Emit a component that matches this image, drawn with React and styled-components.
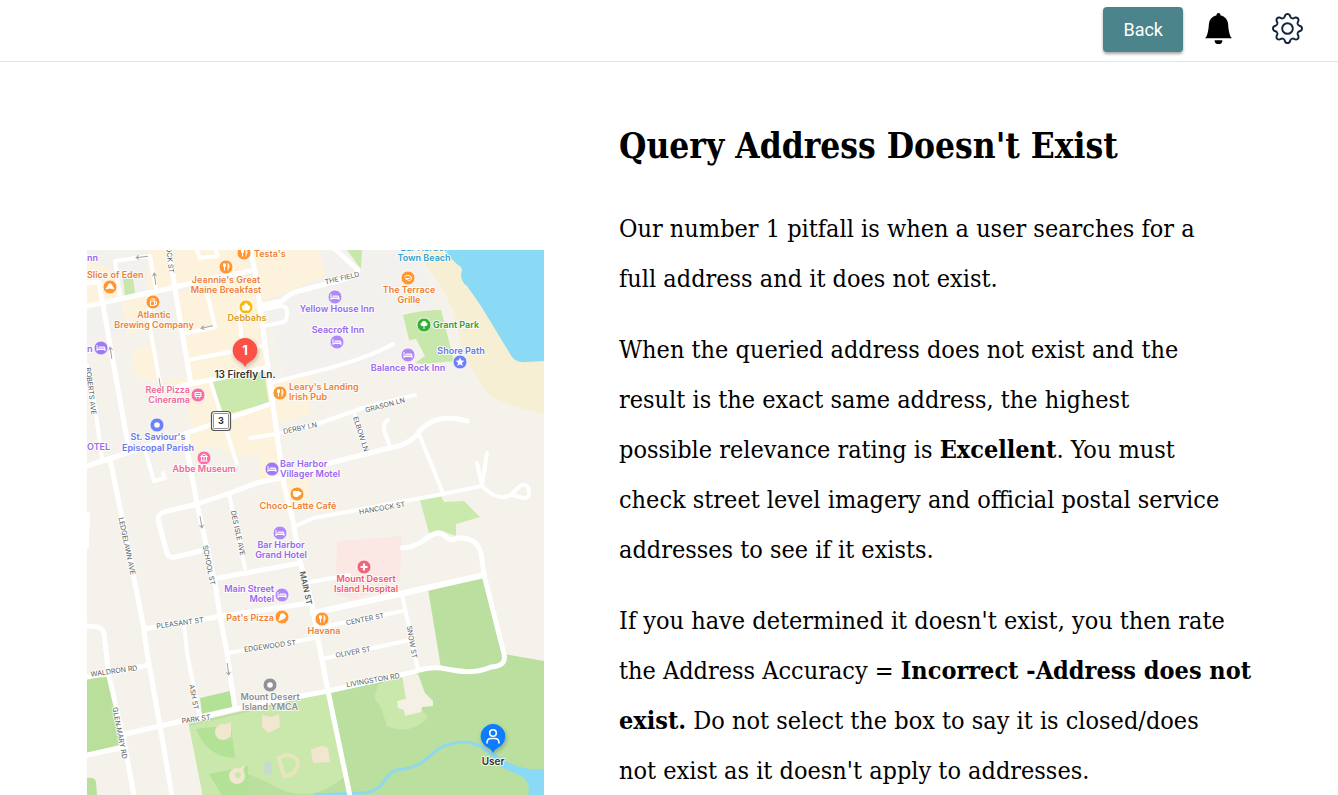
import React from "react";
import styled, { createGlobalStyle } from "styled-components";
import { BsBellFill, BsGear } from "react-icons/bs";

const GlobalStyle = createGlobalStyle`
  *, *::before, *::after { box-sizing: border-box; }
  body { margin: 0; background: #fff; color: #000; }
`;

const slab = `"Roboto Slab", "DejaVu Serif Condensed", "DejaVu Serif", serif`;

const Header = styled.header`
  display: flex;
  justify-content: flex-end;
  align-items: flex-start;
  padding: 7px 35px 9px;
  border-bottom: 1px solid #e2e4e6;
`;

const BackButton = styled.button`
  height: 45px;
  padding: 0 20px;
  margin-right: 20px;
  border: 0;
  border-radius: 4px;
  background: #4b858b;
  color: #fff;
  font: 400 18px/24px Roboto, "Liberation Sans", sans-serif;
  box-shadow: 0 2px 3px rgba(0, 0, 0, 0.35);
  cursor: pointer;
`;

const IconButton = styled.button`
  display: flex;
  padding: 6px 0 0;
  border: 0;
  background: none;
  color: ${(p) => p.$color};
  font-size: 31px;
  cursor: pointer;

  & + & { margin-left: 38px; }
`;

const Main = styled.main`
  display: grid;
  grid-template-columns: 457fr 660fr;
  column-gap: 75px;
  align-items: end;
  padding: 53px 59px 0 87px;
`;

const Figure = styled.figure`
  margin: 0;
`;

const MapSvg = styled.svg`
  display: block;
  width: 100%;
  height: auto;
  background: #f5f2eb;
`;

const Article = styled.article`
  font-family: ${slab};
`;

const Title = styled.h1`
  margin: 0 0 27px;
  font-size: 35px;
  line-height: 62px;
  font-weight: 700;
`;

const Paragraph = styled.p`
  margin: 0;
  font-size: 25px;
  line-height: 50px;

  & + & { margin-top: 21px; }
`;

const Road = styled.path`
  fill: none;
  stroke: #fff;
  stroke-width: ${(p) => p.$w || 5};
  stroke-linecap: round;
  stroke-linejoin: round;
`;

const Label = styled.text`
  font-family: Inter, "Liberation Sans", sans-serif;
  font-size: ${(p) => p.$size || 9}px;
  font-weight: ${(p) => p.$weight || 600};
  fill: ${(p) => p.$color};
  stroke: #fffc;
  stroke-width: 2;
  paint-order: stroke;
  stroke-linejoin: round;
`;

const C = {
  orange: "#ee8238",
  purple: "#9a68ee",
  pink: "#f0679d",
  blue: "#6a78ee",
  red: "#ee5a6c",
  green: "#2f9a3a",
  sea: "#2fa3cf",
  gold: "#dc9a24",
  gray: "#8e8e92",
  dark: "#333333",
  street: "#5c5c5c",
};

const roads = [
  ["M0 56 L80 39 L105 33 L163 21", 5],
  ["M82 0 L88 39 L95 82 L104 134"],
  ["M33 46 L28 11 L63 6 L69 39", 4],
  ["M62 44 L64 84 L73 134", 4],
  ["M90 137 L123 130 L178 118"],
  ["M101 110 L175 96", 4],
  ["M95 84 L128 77 L119 39", 4],
  ["M163 0 L168 21 L175 71 L183 133 L190 184 L196 231 L206 271 L213 311 L225 354 L230 384 L241 441 L263 546", 5],
  ["M172 56 L195 51 Q203 43 212 41 L247 32 Q272 26 271 20 L247 -2"],
  ["M173 60 L194 56 Q201 56 200 64 Q200 73 192 73 L177 76", 4],
  ["M152 63 L155 92", 4],
  ["M109 -2 L113 8 L131 6 L128 -2", 4],
  ["M183 133 L243 118 Q285 106 306 94", 4],
  ["M123 130 L150 214", 4],
  ["M0 216 L37 204 L100 183 L183 154"],
  ["M163 188 L190 184 L230 174 L276 158 L328 145", 4],
  ["M267 162 L280 204", 3],
  ["M113 301 L88 307 Q82 308 80 303 L71 270 Q71 264 77 262 L110 254 L143 243 L170 233 L193 228 L243 213 L303 198 Q324 194 332 182 Q348 162 380 171", 5],
  ["M303 197 L297 180 Q296 173 301 170", 4],
  ["M332 184 L356 243", 4],
  ["M208 276 L227 268 L356 244 L395 236 Q410 252 424 245 L433 236 Q440 232 442 241 Q443 248 437 248 L424 245", 4],
  ["M400 203 L395 235 L390 213", 4],
  ["M100 183 L101 204 L110 254 L128 333 L133 366 L140 403 L148 459"],
  ["M142 244 L158 318", 4],
  ["M126 329 L213 313"],
  ["M218 333 L262 325", 4],
  ["M57 379 L130 367 L222 353"],
  ["M226 363 L313 344 L397 325", 6],
  ["M315 298 C336 297 342 282 352 283 C359 283 360 294 370 288 Q390 287 394 303 L397 325 L417 404 Q420 416 404 417 C388 424 374 422 354 418 Q340 417 327 422 L241 441 L148 459 L38 484 L34 498 L0 505", 5],
  ["M141 403 L228 388", 4],
  ["M230 378 L316 361", 4],
  ["M235 409 L323 390", 4],
  ["M315 344 L331 420", 4],
  ["M23 209 L35 268 L57 379 L60 403 L73 476 L85 546"],
  ["M97 374 L100 403 L112 464", 4],
  ["M0 376 L10 377 Q16 378 17 384 L22 426 L38 496 L47 546", 5],
  ["M0 427 L62 415", 5],
  ["M0 115 L7 151 L15 208", 4],
  ["M0 33 L12 32 L25 106 L42 200", 5],
  ["M58 200 L67 231 L78 228 L76 223", 4],
  ["M1 264 L0 297", 4],
];

const streets = [
  ["THE FIELD", 255, 28, -13],
  ["OCK ST", 83, 10, 84],
  ["ROBERTS AVE", 4, 141, 83],
  ["DERBY LN", 213, 178, -12],
  ["GRASON LN", 298, 155, -15],
  ["ELBOW LN", 274, 184, 72],
  ["HANCOCK ST", 295, 258, -10],
  ["DES ISLE AVE", 151, 283, 78],
  ["LEDGELAWN AVE", 40, 296, 78],
  ["SCHOOL ST", 122, 315, 79],
  ["MAIN ST", 219, 338, 78, 600, 8],
  ["PLEASANT ST", 93, 373, -8],
  ["EDGEWOOD ST", 183, 396, -8],
  ["CENTER ST", 278, 369, -11],
  ["OLIVER ST", 266, 402, -11],
  ["SNOW ST", 325, 392, 80],
  ["LIVINGSTON RD", 286, 430, -10],
  ["ASH ST", 107, 447, 79],
  ["PARK ST", 109, 469, -8],
  ["WALDRON RD", 27, 421, -8],
  ["GLEN MARY RD", 33, 483, 79],
];

const labels = [
  ["nn", 0, 11, C.purple, "start"],
  ["Slice of Eden", 0, 28, C.orange, "start"],
  ["Testa's", 167, 7, C.orange, "start"],
  ["Jeannie's Great", 139, 33, C.orange],
  ["Maine Breakfast", 139, 43, C.orange],
  ["Bar Harbor", 337, 1, C.sea],
  ["Town Beach", 337, 11, C.sea],
  ["The Terrace", 322, 43, C.orange],
  ["Grille", 322, 53, C.orange],
  ["Atlantic", 67, 68, C.orange],
  ["Brewing Company", 67, 78, C.orange],
  ["Debbahs", 160, 71, C.gold],
  ["Yellow House Inn", 250, 62, C.purple],
  ["Seacroft Inn", 251, 83, C.purple],
  ["Grant Park", 346, 78, C.green, "start"],
  ["Shore Path", 374, 104, C.blue],
  ["Balance Rock Inn", 321, 121, C.purple],
  ["n", 0, 102, C.purple, "start"],
  ["Leary's Landing", 202, 140, C.orange, "start"],
  ["Irish Pub", 202, 150, C.orange, "start"],
  ["Reel Pizza", 103, 143, C.pink, "end"],
  ["Cinerama", 103, 153, C.pink, "end"],
  ["St. Saviour's", 71, 190, C.blue],
  ["Episcopal Parish", 71, 201, C.blue],
  ["OTEL", 0, 200, C.purple, "start"],
  ["Abbe Museum", 117, 222, C.pink],
  ["Bar Harbor", 193, 217, C.purple, "start"],
  ["Villager Motel", 193, 227, C.purple, "start"],
  ["Choco-Latte Café", 211, 259, C.orange],
  ["Bar Harbor", 194, 298, C.purple],
  ["Grand Hotel", 194, 308, C.purple],
  ["Mount Desert", 279, 332, C.red],
  ["Island Hospital", 279, 342, C.red],
  ["Main Street", 187, 342, C.purple, "end"],
  ["Motel", 187, 352, C.purple, "end"],
  ["Pat's Pizza", 187, 371, C.orange, "end"],
  ["Havana", 237, 384, C.orange],
  ["Mount Desert", 183, 450, C.gray],
  ["Island YMCA", 183, 460, C.gray],
];

const glyphs = {
  bed: "M-4 -3V3M-4 1.5H4V3M-3 0H4V1.5M-2 -1H3.5V0",
  fork: "M-2.5 -3.5V-1Q-2.5 0 -1.5 0Q-0.5 0 -0.5 -1V-3.5M-1.5 -3.5V3.5M2 3.5V-3.5Q3.5 -2 3 0.5H2",
  slice: "M-4 2Q0 0 4 2L1 -3Q-1 -4 -2 -1Z",
  pizza: "M-3 3.5L-1 -3Q3 -4 3.5 0ZM-3 3.5L3 1",
  mug: "M-2.5 -1V3.5H1.5V-1ZM1.5 0H3.5V2.5H1.5M-3 -2Q-2 -4 0 -3Q2 -4 2 -1.5",
  bag: "M-3.5 -1H3.5L3 3H-3ZM-1.5 -1Q-1.5 -3.5 0 -3.5Q1.5 -3.5 1.5 -1",
  burger: "M-3.5 -1.5Q0 -4 3 -1.5L3.5 1Q2 4 0 2L-3 0.5H2",
  tree: "M0 4V0M-2.5 0.5Q-4 -1 -2 -2.5Q0 -5 2 -2.5Q4 -1 2.5 0.5Z",
  film: "M-3 -2.5H3V1.5H-3ZM-2 3H-1M1 3H2M-3 -0.5H3",
  museum: "M-3.5 -1.5L0 -4L3.5 -1.5ZM-2.5 -1V2.5M0 -1V2.5M2.5 -1V2.5M-3.5 3H3.5",
  cup: "M-3.5 -2.5H2V0.5Q2 2.5 0 2.5H-1.5Q-3.5 2.5 -3.5 0.5ZM2 -1.5H4Q4 1 2 1",
  cross: "M0 -3.5V3.5M-3.5 0H3.5",
};
const filled = new Set(["slice", "pizza", "bag", "tree", "cup"]);

const places = [
  ["fork", 157, 3, "#ff9630"], ["fork", 139, 17, "#ff9630"], ["slice", 23, 37, "#ff9630"],
  ["mug", 66, 52, "#ff9630"], ["bag", 159, 57, "#f8b90c"], ["bed", 14, 98, "#a07af4"],
  ["burger", 321, 28, "#ff9630"], ["bed", 248, 47, "#b088f8"], ["bed", 250, 92, "#b088f8"],
  ["tree", 337, 75, "#37ad38"], ["bed", 321, 105, "#b088f8"], ["star", 373, 112, "#6d80fa"],
  ["fork", 193, 143, "#f59a34"], ["film", 111, 145, "#fb6da5"], ["dot", 70, 175, "#6d80fa"],
  ["museum", 117, 208, "#fb6da5"], ["bed", 185, 219, "#a07af4"], ["cup", 210, 244, "#f59a34"],
  ["bed", 193, 283, "#b088f8"], ["cross", 277, 317, "#f36375"], ["bed", 195, 345, "#b088f8"],
  ["pizza", 195, 367, "#ff9630"], ["fork", 235, 369, "#ff9630"], ["dot", 183, 435, "#929294"],
];

const arrows = [
  [55, 7, 172], [68, 29, -98], [120, 77, 168], [24, 103, -98], [73, 134, 80], [114, 272, 80], [141, 419, 82],
];

function Place({ kind, x, y, color }) {
  return (
    <g transform={`translate(${x} ${y})`}>
      <circle r="7" fill={color} stroke="#fff" strokeWidth="0.8" />
      {kind === "dot" && <circle r="2.8" fill="#fff" />}
      {kind === "star" && (
        <path d="M0 -4.4L1.3 -1.5L4.4 -1.3L2 0.8L2.7 3.9L0 2.2L-2.7 3.9L-2 0.8L-4.4 -1.3L-1.3 -1.5Z" fill="#fff" />
      )}
      {glyphs[kind] && (
        <path
          d={glyphs[kind]}
          fill={filled.has(kind) ? "#fff" : "none"}
          stroke="#fff"
          strokeWidth={kind === "cross" ? 2.2 : 1}
          strokeLinejoin="round"
        />
      )}
    </g>
  );
}

function TownMap() {
  return (
    <MapSvg viewBox="0 0 457 546" role="img" aria-label="Map of Bar Harbor with result 1 and the user location">
      <defs>
        <filter id="pinShadow" x="-50%" y="-50%" width="200%" height="200%">
          <feDropShadow dx="1" dy="2" stdDeviation="2" floodOpacity="0.25" />
        </filter>
      </defs>
      <rect width="457" height="546" fill="#f5f2eb" />

      <path fill="#f3f1ee" d="M0 0H330L350 60L315 60L320 105L200 130L180 60L0 90Z" />
      <path fill="#fdf2dc" d="M0 10L27 20L33 46L0 55ZM60 0H150L165 20L90 38L60 44ZM165 0H232L238 25L205 40L175 52ZM90 42L150 28L168 30L172 80L182 130L222 128L222 165L192 172L196 225L222 222L222 255L200 265L190 225L172 232L172 205L150 208L128 195L102 205L104 175L95 135L48 128L45 100L66 95L72 130L100 130ZM33 48L62 42L64 80L40 84Z" />
      <path fill="#f6efd3" d="M330 0H360L457 90V164Q430 158 414 151Q398 146 392 130L377 106L366 60L356 40Z" />
      <path fill="#8adaf6" d="M357 0Q365 10 371 15Q377 18 374 24Q374 32 380 36L394 56L414 89L425 107Q430 113 438 112L457 111V0Z" />
      <path fill="#c8e8ab" d="M36 29L46 28L48 43L38 46ZM260 0H275L274 19ZM316 65Q335 60 354 60L367 111L337 114L328 113L338 106L329 89L322 90Z" />
      <path fill="#cbe9ac" d="M125 131L177 121L182 153L134 166Z" />
      <path fill="#c9e9ad" d="M333 250L354 246L357 252L377 251L393 267L369 274V286L352 280L342 283Z" />
      <path fill="#fbe8e5" d="M250 291L315 286L313 331L268 350L248 344Z" />

      <path fill="#badf9f" d="M341 339L390 327L400 329L417 404L457 411V546H40L100 474L241 441L327 422L354 418Z" />
      <path fill="#f5f2eb" d="M40 484L102 474L116 546H40Z" />
      <path fill="#cbe8ac" d="M102 476L241 443L260 524Q222 560 180 532L161 524V546H116Z" />
      <path fill="#b3e297" d="M109 479Q130 476 144 477L148 508Q121 508 109 479ZM122 524L161 516V546H135ZM113 448L143 441L147 459L115 464Z" />
      <path fill="#b9df9b" d="M0 428L23 427L36 494L0 503ZM0 528Q8 527 9 532L10 546H0Z" />
      <g fill="#f1e7cf">
        <circle cx="136" cy="482" r="8" />
        <path d="M136 475L144 472L144 489ZM175 465L184 467L192 464L193 477L182 483L175 477Z" />
        <circle cx="150" cy="526" r="8" />
        <path d="M150 520L158 515L155 526Z" />
        <path d="M224 500Q236 493 241 498L243 512L226 513Z" />
      </g>
      <path d="M192 508Q203 501 211 511Q210 526 197 526Z" fill="#c7e9a9" stroke="#e8e4be" strokeWidth="4" />
      <circle cx="151" cy="525" r="3" fill="#cbe8ac" />
      <path fill="#c6dccc" d="M176 513L184 510L185 524L178 526Z" />
      <path fill="#cbe8ac" d="M292 434L312 427L341 468Q322 486 300 476L294 458L287 447Z" />
      <path fill="#f5f0e6" d="M315 427L331 424L338 443L346 451V456L335 457L334 462L318 466L317 460L311 458L310 451L319 449Z" />

      <path d="M227 545L274 543C300 542 295 524 310 520C340 517 340 504 357 496Q384 486 400 501L420 517" fill="none" stroke="#8fd8ee" strokeWidth="3" />
      <path fill="#8adaf6" d="M404 501L420 512Q440 521 457 519V546H441Q444 534 436 527L414 517Z" />

      <g>{roads.map(([d, w]) => <Road key={d} d={d} $w={w} />)}</g>

      {arrows.map(([x, y, r]) => (
        <path key={`${x}-${y}`} transform={`translate(${x} ${y}) rotate(${r})`} d="M-6 0H6M3 -2L6 0L3 2" fill="none" stroke="#a3a3a3" />
      ))}

      {streets.map(([name, x, y, r, weight, size]) => (
        <Label key={name} $size={size || 7} $weight={weight || 400} $color={C.street} textAnchor="middle" dominantBaseline="central" transform={`translate(${x} ${y}) rotate(${r})`}>
          {name}
        </Label>
      ))}

      {places.map(([kind, x, y, color]) => <Place key={`${x}-${y}`} kind={kind} x={x} y={y} color={color} />)}

      {labels.map(([name, x, y, color, anchor]) => (
        <Label key={`${x}-${y}`} x={x} y={y} $color={color} textAnchor={anchor || "middle"}>{name}</Label>
      ))}

      <rect x="124.500" y="161.500" width="19" height="19" rx="3" fill="#fff" stroke="#555" strokeWidth="1.200" />
      <rect x="126.500" y="163.500" width="15" height="15" rx="1" fill="#fff" stroke="#777" strokeWidth="0.800" />
      <Label x="134" y="174" $color={C.dark} $weight={700} textAnchor="middle">3</Label>

      <g filter="url(#pinShadow)">
        <path fill="#fc5146" d="M158 117Q156 113 152 111A12.300 12.300 0 1 1 164 111Q160 113 158 117Z" />
      </g>
      <text x="158" y="105" textAnchor="middle" fill="#fff" fontFamily="Inter, sans-serif" fontWeight="700" fontSize="13">1</text>
      <Label x="158" y="128" $size={10} $color={C.dark} textAnchor="middle">13 Firefly Ln.</Label>

      <g filter="url(#pinShadow)">
        <path fill="#0a7cff" d="M406 503Q404 499 400 497A12.300 12.300 0 1 1 412 497Q408 499 406 503Z" />
      </g>
      <g fill="none" stroke="#fff" strokeWidth="1.600" strokeLinecap="round">
        <circle cx="406" cy="483" r="3.300" />
        <path d="M400 493Q400 488.500 404 488.500H408Q412 488.500 412 493" />
      </g>
      <Label x="406" y="515" $size={10} $color={C.dark} textAnchor="middle">User</Label>
    </MapSvg>
  );
}

export default function App() {
  return (
    <>
      <GlobalStyle />
      <Header>
        <BackButton type="button">Back</BackButton>
        <IconButton type="button" aria-label="Notifications" $color="#000"><BsBellFill /></IconButton>
        <IconButton type="button" aria-label="Settings" $color="#10243a"><BsGear /></IconButton>
      </Header>
      <Main>
        <Figure><TownMap /></Figure>
        <Article>
          <Title>Query Address Doesn't Exist</Title>
          <Paragraph>
            Our number 1 pitfall is when a user searches for a<br />
            full address and it does not exist.
          </Paragraph>
          <Paragraph>
            When the queried address does not exist and the<br />
            result is the exact same address, the highest<br />
            possible relevance rating is <strong>Excellent</strong>. You must<br />
            check street level imagery and official postal service<br />
            addresses to see if it exists.
          </Paragraph>
          <Paragraph>
            If you have determined it doesn't exist, you then rate<br />
            the Address Accuracy = <strong>Incorrect -Address does not<br />
            exist.</strong> Do not select the box to say it is closed/does<br />
            not exist as it doesn't apply to addresses.
          </Paragraph>
        </Article>
      </Main>
    </>
  );
}
